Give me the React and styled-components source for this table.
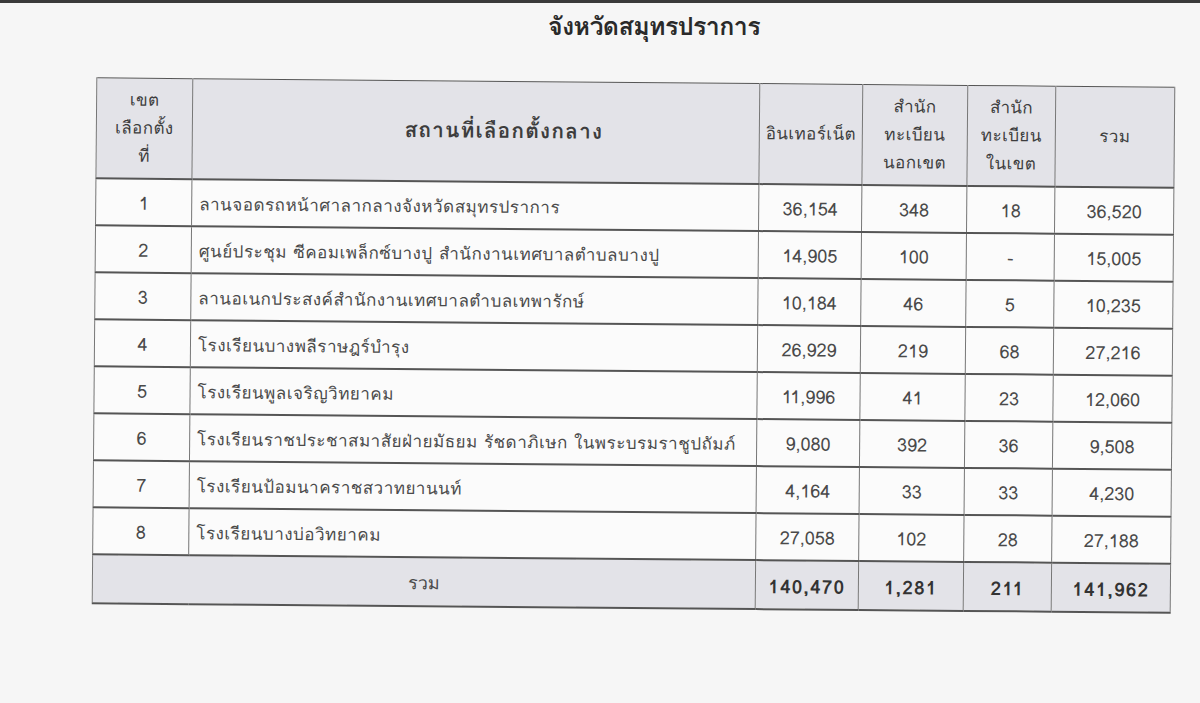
import React from "react";
import styled, { createGlobalStyle } from "styled-components";

const Global = createGlobalStyle`
  html, body { margin: 0; padding: 0; background: #f6f6f6; }
  body { font-family: Loma, Garuda, "Tlwg Typo", Tahoma, "Noto Sans Thai", "Noto Sans", "DejaVu Sans", sans-serif; color: #474747; }
`;

const Page = styled.div`
  width: 1200px;
  height: 703px;
  overflow: hidden;
  box-sizing: border-box;
  border-top: 3px solid #3a3a3a;
  background: #f6f6f6;
  display: flex;
  flex-direction: column;
`;

const Title = styled.h1`
  margin: 6px 0 0 0;
  padding-left: 108px;
  text-align: center;
  font-size: 25px;
  line-height: 34px;
  font-weight: 700;
  color: #2a2a2a;
  letter-spacing: -0.6px;
`;

const Sheet = styled.div`
  padding: 39px 0 0 94px;
`;

const Table = styled.table`
  width: 1078px;
  table-layout: fixed;
  border-collapse: collapse;
  transform: rotate(0.5deg);
  transform-origin: 50% 50%;
  border: 1.5px solid #555;
`;

const HeadRow = styled.tr`
  height: 100px;
  background: #e3e3e8;
`;

const HeadCell = styled.th`
  font-weight: ${(p) => (p.$big ? 700 : 400)};
  font-size: ${(p) => (p.$big ? "21px" : "17px")};
  letter-spacing: ${(p) => (p.$big ? "1.1px" : "0.4px")};
  line-height: 28px;
  color: #3d3d3d;
  text-align: center;
  vertical-align: middle;
  padding: ${(p) => (p.$big ? "0 0 0 56px" : "0")};
  border-left: 1px solid #777;
  border-right: 1px solid #777;
  border-bottom: 2px solid #555;
  white-space: nowrap;
`;

const Row = styled.tr`
  height: ${(p) => (p.$total ? "49px" : "47px")};
  background: ${(p) => (p.$total ? "#e3e3e8" : "#fbfbfb")};
`;

const Cell = styled.td`
  padding: ${(p) => (p.$left ? "3px 0 0 7px" : "3px 0 0 0")};
  text-align: ${(p) => (p.$left ? "left" : "center")};
  vertical-align: middle;
  font-size: ${(p) => (p.$left ? "17px" : p.$bold ? "19px" : "18px")};
  letter-spacing: ${(p) => (p.$left ? "0.5px" : p.$bold ? "1.2px" : "0")};
  font-weight: ${(p) => (p.$bold ? 700 : 400)};
  color: ${(p) => (p.$bold ? "#333" : "#4a4a4a")};
  border-left: 1px solid #777;
  border-right: 1px solid #777;
  border-bottom: 2px solid #555;
  white-space: nowrap;
  overflow: hidden;
`;

const rows = [
  ["1", "ลานจอดรถหน้าศาลากลางจังหวัดสมุทรปราการ", "36,154", "348", "18", "36,520"],
  ["2", "ศูนย์ประชุม ซีคอมเพล็กซ์บางปู สำนักงานเทศบาลตำบลบางปู", "14,905", "100", "-", "15,005"],
  ["3", "ลานอเนกประสงค์สำนักงานเทศบาลตำบลเทพารักษ์", "10,184", "46", "5", "10,235"],
  ["4", "โรงเรียนบางพลีราษฎร์บำรุง", "26,929", "219", "68", "27,216"],
  ["5", "โรงเรียนพูลเจริญวิทยาคม", "11,996", "41", "23", "12,060"],
  ["6", "โรงเรียนราชประชาสมาสัยฝ่ายมัธยม รัชดาภิเษก ในพระบรมราชูปถัมภ์", "9,080", "392", "36", "9,508"],
  ["7", "โรงเรียนป้อมนาคราชสวาทยานนท์", "4,164", "33", "33", "4,230"],
  ["8", "โรงเรียนบางบ่อวิทยาคม", "27,058", "102", "28", "27,188"],
];

const widths = [96, 567, 103, 105, 88, 119];

export default function App() {
  return (
    <>
      <Global />
      <Page>
        <Title>จังหวัดสมุทรปราการ</Title>
        <Sheet>
          <Table>
            <colgroup>
              {widths.map((w, i) => (
                <col key={i} style={{ width: w }} />
              ))}
            </colgroup>
            <thead>
              <HeadRow>
                <HeadCell>เขต<br />เลือกตั้ง<br />ที่</HeadCell>
                <HeadCell $big>สถานที่เลือกตั้งกลาง</HeadCell>
                <HeadCell>อินเทอร์เน็ต</HeadCell>
                <HeadCell>สำนัก<br />ทะเบียน<br />นอกเขต</HeadCell>
                <HeadCell>สำนัก<br />ทะเบียน<br />ในเขต</HeadCell>
                <HeadCell>รวม</HeadCell>
              </HeadRow>
            </thead>
            <tbody>
              {rows.map((r) => (
                <Row key={r[0]}>
                  <Cell>{r[0]}</Cell>
                  <Cell $left>{r[1]}</Cell>
                  <Cell>{r[2]}</Cell>
                  <Cell>{r[3]}</Cell>
                  <Cell>{r[4]}</Cell>
                  <Cell>{r[5]}</Cell>
                </Row>
              ))}
              <Row $total>
                <Cell colSpan={2}>รวม</Cell>
                <Cell $bold>140,470</Cell>
                <Cell $bold>1,281</Cell>
                <Cell $bold>211</Cell>
                <Cell $bold>141,962</Cell>
              </Row>
            </tbody>
          </Table>
        </Sheet>
      </Page>
    </>
  );
}
